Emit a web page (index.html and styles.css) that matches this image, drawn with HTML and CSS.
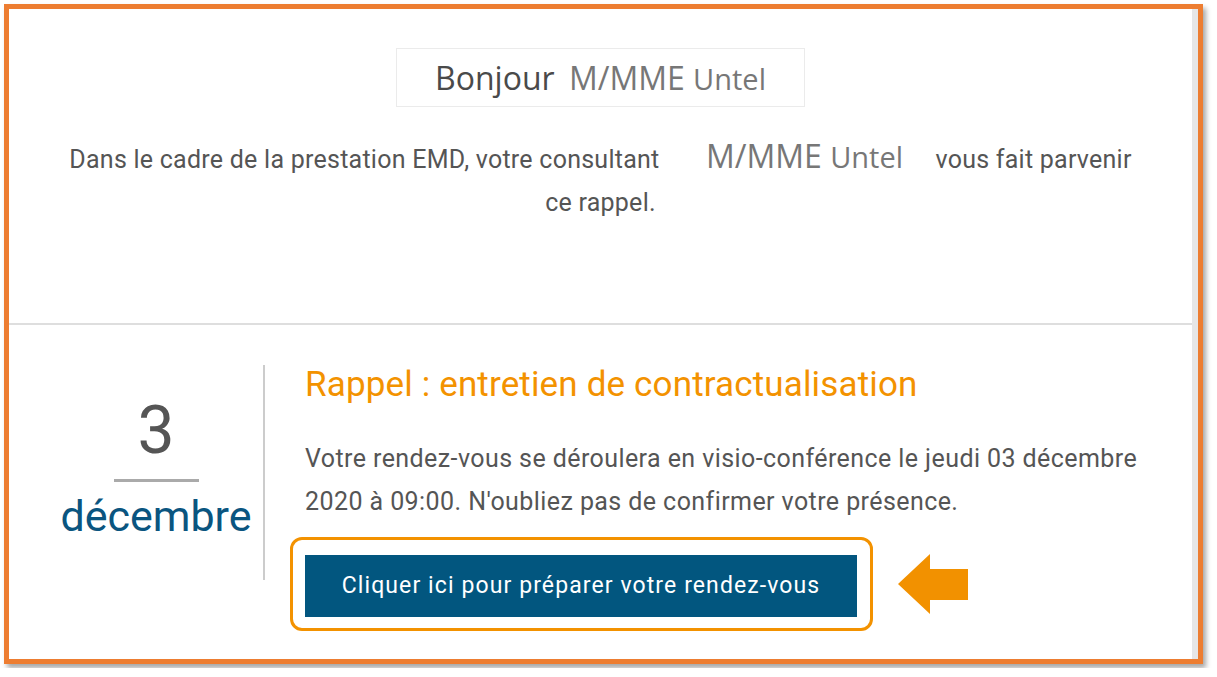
FILE: index.html
```html
<!DOCTYPE html>
<html lang="fr">
  <head>
    <meta charset="UTF-8" />
    <meta name="viewport" content="width=device-width, initial-scale=1.0" />
    <title>Rappel EMD</title>
    <link rel="stylesheet" href="styles.css">
  </head>
  <body>
    <div class="cadre">
      <div class="carte">
        <section class="haut">
          <div class="bonjour">Bonjour <span class="nom">M/MME <small>Untel</small></span></div>
          <p class="intro">Dans le cadre de la prestation EMD, votre consultant <span class="nom consultant">M/MME <small>Untel</small></span> vous fait parvenir ce rappel.</p>
        </section>
        <section class="bas">
          <div class="date">
            <span class="jour">3</span>
            <span class="trait"></span>
            <span class="mois">décembre</span>
          </div>
          <div class="contenu">
            <h2>Rappel : entretien de contractualisation</h2>
            <p>Votre rendez-vous se déroulera en visio-conférence le jeudi 03 décembre 2020 à 09:00. N'oubliez pas de confirmer votre présence.</p>
            <div class="ligne-bouton">
              <div class="surlignage">
                <a class="bouton" href="#">Cliquer ici pour préparer votre rendez-vous</a>
              </div>
              <svg class="fleche" width="70" height="60" viewBox="0 0 70 60">
                <polygon points="0,30 32,0 32,15 70,15 70,46 32,46 32,60" fill="#f29100" />
              </svg>
            </div>
          </div>
        </section>
      </div>
    </div>
  </body>
</html>
```

FILE: styles.css
```css
body {
  margin: 0;
  background: #fff;
  font-family: Roboto, "Liberation Sans", sans-serif;
}
.cadre {
  margin: 4px;
  width: 1189px;
  height: 650px;
  border: 5px solid #ed7d31;
  box-shadow: 3px 4px 5px rgba(0, 0, 0, 0.35);
  background: #fff;
}
.carte {
  height: 100%;
  border-right: 6px solid #e6e6e6;
  display: flex;
  flex-direction: column;
}
.haut {
  height: 316px;
  box-sizing: border-box;
  padding-top: 39px;
  border-bottom: 2px solid #dedede;
  text-align: center;
}
.bonjour {
  width: 407px;
  height: 57px;
  margin: 0 auto;
  border: 1px solid #ebebeb;
  font-family: "Open Sans", sans-serif;
  font-size: 32px;
  color: #4a4a4a;
  line-height: 57px;
}
.nom {
  font-family: "Open Sans", sans-serif;
  font-size: 32px;
  color: #777;
  margin-left: 6px;
}
.nom small {
  font-size: 29px;
}
.intro {
  margin: 27px 55px 0;
  font-size: 25px;
  letter-spacing: 0.25px;
  line-height: 43px;
  color: #555;
}
.intro .nom {
  letter-spacing: 0;
}
.consultant {
  margin: 0 26px 0 40px;
}
.bas {
  flex: 1;
  display: flex;
  padding-top: 40px;
}
.date {
  width: 216px;
  margin-left: 40px;
  height: 215px;
  border-right: 2px solid #ccc;
  display: flex;
  flex-direction: column;
  align-items: center;
  justify-content: center;
  padding-bottom: 10px;
  box-sizing: border-box;
}
.jour {
  font-size: 66px;
  line-height: 66px;
  color: #555;
}
.trait {
  width: 85px;
  height: 3px;
  background: #aaa;
  margin: 15px 0 12px;
}
.mois {
  font-size: 43px;
  line-height: 44px;
  color: #0a5580;
}
.contenu {
  flex: 1;
  padding: 0 50px 0 40px;
}
h2 {
  margin: 0;
  font-size: 35px;
  font-weight: 400;
  letter-spacing: 0.15px;
  line-height: 40px;
  color: #f39200;
}
.contenu p {
  margin: 32px 0 0;
  font-size: 25px;
  letter-spacing: 0.42px;
  line-height: 43px;
  color: #555;
}
.ligne-bouton {
  display: flex;
  align-items: center;
  gap: 25px;
  margin: 14px 0 0 -15px;
}
.surlignage {
  border: 3px solid #f39200;
  border-radius: 12px;
  padding: 15px 13px 11px 12px;
}
.bouton {
  display: block;
  width: 552px;
  height: 62px;
  line-height: 62px;
  background: #02567f;
  color: #fff;
  text-align: center;
  text-decoration: none;
  font-size: 23px;
  letter-spacing: 1.1px;
}
.fleche {
  display: block;
}
```
